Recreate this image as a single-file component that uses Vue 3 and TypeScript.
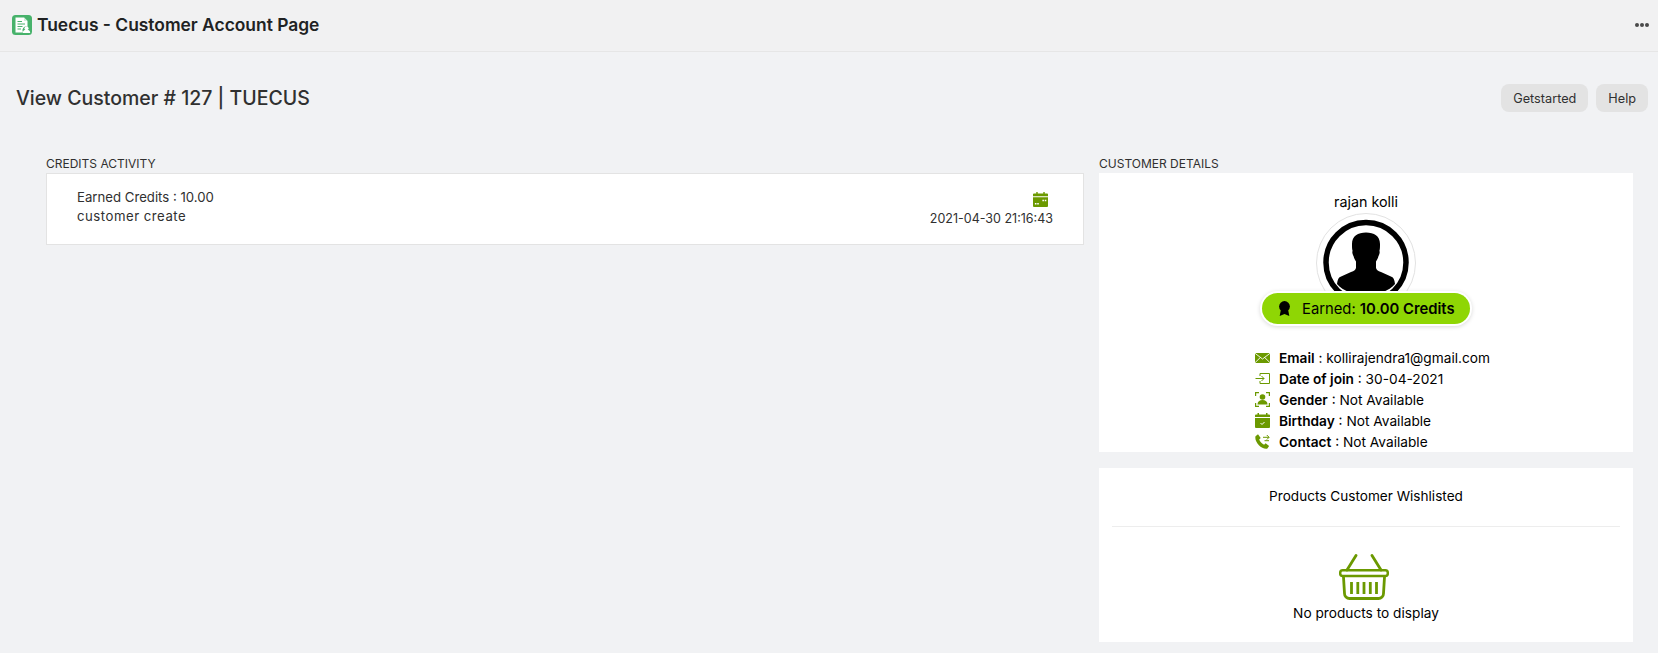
<script setup lang="ts">
interface Row { icon: string; label: string; value: string }
const rows: Row[] = [
  { icon: 'mail', label: 'Email', value: 'kollirajendra1@gmail.com' },
  { icon: 'join', label: 'Date of join', value: '30-04-2021' },
  { icon: 'gender', label: 'Gender', value: 'Not Available' },
  { icon: 'birthday', label: 'Birthday', value: 'Not Available' },
  { icon: 'contact', label: 'Contact', value: 'Not Available' },
]
</script>

<template>
  <div class="page">
    <header class="topbar">
      <div class="brand">
        <svg class="logo" viewBox="0 0 20 20" width="20" height="20">
          <rect width="20" height="20" rx="3.5" fill="#47b26b" />
          <path d="M3.500 2.500h8.500l3.500 3.500v5.500a4 4 0 0 0-4.500 6H3.500z" fill="#fff" />
          <path d="M12 2.500V6h3.500" fill="#cfeeda" />
          <path d="M5.500 6.500h4.500M5.500 9h7.500M5.500 11.500h5M5.500 14h3.500" stroke="#47b26b" stroke-width="1" />
          <circle cx="14.500" cy="13.200" r="2" fill="#fff" />
          <path d="M10.800 18c0-2.300 1.500-3.500 3.700-3.500s3.700 1.200 3.700 3.500z" fill="#fff" />
        </svg>
        <span class="app-title">Tuecus - Customer Account Page</span>
      </div>
      <div class="dots"><i></i><i></i><i></i></div>
    </header>

    <div class="heading">
      <h1>View Customer # 127 | TUECUS</h1>
      <div class="actions">
        <button class="btn">Getstarted</button>
        <button class="btn">Help</button>
      </div>
    </div>

    <main class="columns">
      <section class="left">
        <div class="section-title">CREDITS ACTIVITY</div>
        <div class="activity">
          <div class="activity-text">
            <div>Earned Credits : 10.00</div>
            <div class="spaced">customer create</div>
          </div>
          <div class="activity-date">
            <svg viewBox="0 0 16 16" width="15" height="15">
              <path d="M0 2.500a1 1 0 0 1 1-1h2.500V0h1.500v1.500h6V0h1.500v1.500H15a1 1 0 0 1 1 1V4.500H0z" fill="#6b9900" />
              <path d="M0 5.500h16V15a1 1 0 0 1-1 1H1a1 1 0 0 1-1-1z" fill="#6b9900" />
              <path d="M2 12.500h1.700M4.500 12.500h1.700M10 9h1.700M12.500 9h1.700" stroke="#fff" stroke-width="1.500" />
            </svg>
            <div>2021-04-30 21:16:43</div>
          </div>
        </div>
      </section>

      <aside class="right">
        <div class="section-title">CUSTOMER DETAILS</div>
        <div class="card profile">
          <div class="name">rajan kolli</div>
          <div class="avatar">
            <svg viewBox="0 0 100 100" width="100" height="100">
              <circle cx="50" cy="50" r="49.500" fill="#fff" stroke="#e2e2e2" />
              <circle cx="50" cy="49.500" r="40" fill="#fff" stroke="#000" stroke-width="5.500" />
              <path d="M36 31c0-8 6-11.500 14-11.500S64 23 64 31c0 3 0 5-.6 7 .6 1 .3 3-.9 5-.5 2-1.500 4-2.500 5.500v6c0 2 2 3.500 5 4.500l11 5c1.500.8 2.500 3 3 7-6 7-17 11-29 11s-23-4-29-11c.5-4 1.500-6.200 3-7l11-5c3-1 5-2.500 5-4.500v-6c-1-1.500-2-3.500-2.500-5.500-1.200-2-1.500-4-.9-5-.6-2-.6-4-.6-7z" fill="#000" />
            </svg>
          </div>
          <div class="pill">
            <svg viewBox="0 0 14 16" width="13" height="15">
              <circle cx="7" cy="5.800" r="5.800" fill="#000" />
              <path d="M3 10 1.800 16 7 14l5.200 2L11 10z" fill="#000" />
            </svg>
            <span>Earned: <b>10.00 Credits</b></span>
          </div>
          <ul class="rows">
            <li v-for="row in rows" :key="row.label">
              <span class="row-icon">
                <svg v-if="row.icon === 'mail'" viewBox="0 0 15 10" width="15" height="10">
                  <rect width="15" height="10" fill="#6b9900" />
                  <path d="M0 .3 7.500 6 15 .3M0 9.700 5.300 4.500M15 9.700 9.700 4.500" stroke="#fff" stroke-width=".9" fill="none" />
                </svg>
                <svg v-else-if="row.icon === 'join'" viewBox="0 0 15 11" width="15" height="11">
                  <path d="M5 3V.5h9.500v10H5V8M.5 5.500h8.500M6.500 3l2.500 2.500L6.500 8" stroke="#6b9900" stroke-width="1" fill="none" />
                </svg>
                <svg v-else-if="row.icon === 'gender'" viewBox="0 0 15 15" width="15" height="15">
                  <path d="M.6 4V.6H4M11 .6h3.400V4M14.400 11v3.400H11M4 14.400H.6V11" stroke="#6b9900" stroke-width="1.200" fill="none" />
                  <circle cx="7.500" cy="5" r="2.800" fill="#6b9900" />
                  <path d="M2.500 12.500c0-3 2-4.500 5-4.500s5 1.500 5 4.500z" fill="#6b9900" />
                </svg>
                <svg v-else-if="row.icon === 'birthday'" viewBox="0 0 15 15" width="15" height="15">
                  <path d="M0 2.500a1 1 0 0 1 1-1h1.500V0h1.500v1.500h7V0h1.500v1.500H14a1 1 0 0 1 1 1v1.500H0z" fill="#6b9900" />
                  <path d="M0 5h15v9a1 1 0 0 1-1 1H1a1 1 0 0 1-1-1z" fill="#6b9900" />
                  <path d="M5.500 10l1.500 1.500L9.500 9" stroke="#fff" stroke-width="1" fill="none" />
                </svg>
                <svg v-else viewBox="0 0 15 15" width="15" height="15">
                  <path d="M.5 2.200 3 .3l2.700 3.700-1.500 1.500c.6 2 2.800 4.400 4.900 5.200l1.500-1.400 3.500 2.700-1.700 2.500C7.200 16 -1 8 .5 2.200z" fill="#6b9900" />
                  <path d="M8 3.300h6M11.800 1l2.300 2.300-2.300 2.300M14 6.700H9.500" stroke="#6b9900" stroke-width="1" fill="none" />
                </svg>
              </span>
              <span><b>{{ row.label }}</b> : {{ row.value }}</span>
            </li>
          </ul>
        </div>
        <div class="card wishlist">
          <div class="wish-title">Products Customer Wishlisted</div>
          <div class="empty">
            <svg viewBox="0 0 50 46" width="50" height="46">
              <path d="M8 16 17 1.500M42 16 33 1.500" stroke="#6b9900" stroke-width="2.800" stroke-linecap="round" fill="none" />
              <rect x="1.200" y="16.200" width="47.600" height="5.800" rx="2.500" fill="none" stroke="#6b9900" stroke-width="2.500" />
              <path d="M4.500 23l1 16.500a5 5 0 0 0 5 5h29a5 5 0 0 0 5-5l1-16.500" fill="none" stroke="#6b9900" stroke-width="2.800" />
              <path d="M12.500 28v12M18.800 28v12M25 28v12M31.300 28v12M37.500 28v12" stroke="#6b9900" stroke-width="2.800" />
            </svg>
            <div class="empty-text">No products to display</div>
          </div>
        </div>
      </aside>
    </main>
  </div>
</template>

<style>
html, body { margin: 0; background: #f1f2f4; }
</style>

<style scoped>
.page { width: 1658px; height: 653px; overflow: hidden; background: #f1f2f4; color: #303030; font-family: "Inter", "Liberation Sans", sans-serif; font-size: 13.2px; }
.topbar { height: 52px; box-sizing: border-box; background: #f1f1f2; border-bottom: 1px solid #e6e6e6; display: flex; align-items: center; justify-content: space-between; padding: 0 9px 2px 12px; }
.brand { display: flex; align-items: center; gap: 5px; }
.logo { display: block; }
.app-title { font-size: 17.400px; font-weight: 600; color: #202223; }
.dots { display: flex; gap: 1px; }
.dots i { width: 4px; height: 4px; border-radius: 50%; background: #4a4a4a; }
.heading { display: flex; justify-content: space-between; align-items: center; padding: 32px 10px 0 16px; height: 28px; }
h1 { margin: 0; font-size: 19.500px; font-weight: 500; color: #303030; }
.actions { display: flex; gap: 8px; }
.btn { height: 28px; padding: 0 12px; border: none; border-radius: 8px; background: #e3e3e3; font: 12.700px "Inter", sans-serif; color: #303030; }
.columns { display: flex; padding: 44px 25px 0 46px; gap: 15px; }
.left { width: 1038px; flex: none; }
.right { flex: 1; }
.section-title { font-size: 12px; line-height: 16px; margin-bottom: 1px; color: #303030; }
.activity { height: 72px; box-sizing: border-box; background: #fff; border: 1px solid #e3e3e3; display: flex; justify-content: space-between; padding: 14px 30px 0; line-height: 19px; }
.spaced { letter-spacing: .5px; }
.activity-date { display: flex; flex-direction: column; align-items: flex-end; gap: 2px; padding-top: 4px; font-size: 12.500px; line-height: 20px; }
.activity-date svg { display: block; margin-right: 5px; }
.card { background: #fff; }
.profile { height: 279px; box-sizing: border-box; display: flex; flex-direction: column; align-items: center; padding-top: 20px; color: #000; font-size: 13.500px; }
.name { line-height: 18px; font-size: 14.300px; }
.avatar { height: 100px; margin-top: 2px; margin-bottom: -20px; }
.avatar svg { display: block; }
.pill { position: relative; height: 32px; width: 208px; box-sizing: border-box; padding-left: 16px; border-radius: 17px; background: #8fd604; box-shadow: 0 0 0 2px #fff, 0 1px 4px 2px rgba(0,0,0,.15); display: flex; align-items: center; gap: 11px; font-size: 14.800px; }
.pill svg { display: block; }
.pill b { font-weight: 600; }
.rows { list-style: none; margin: 23px 0 0; padding: 0; width: 222px; font-size: 13.700px; }
.rows li { height: 21px; display: flex; align-items: center; gap: 9px; white-space: nowrap; }
.rows b { font-weight: 600; }
.row-icon { width: 15px; display: flex; justify-content: center; }
.row-icon svg { display: block; }
.wishlist { margin-top: 16px; height: 174px; box-sizing: border-box; padding: 0 13px; color: #000; }
.wish-title { height: 58px; line-height: 56px; text-align: center; border-bottom: 1px solid #ededed; font-size: 13.600px; }
.empty { display: flex; flex-direction: column; align-items: center; padding-top: 27px; }
.empty svg { display: block; margin-bottom: 4px; margin-right: 5px; }
.empty-text { font-size: 13.700px; line-height: 18px; }
</style>
